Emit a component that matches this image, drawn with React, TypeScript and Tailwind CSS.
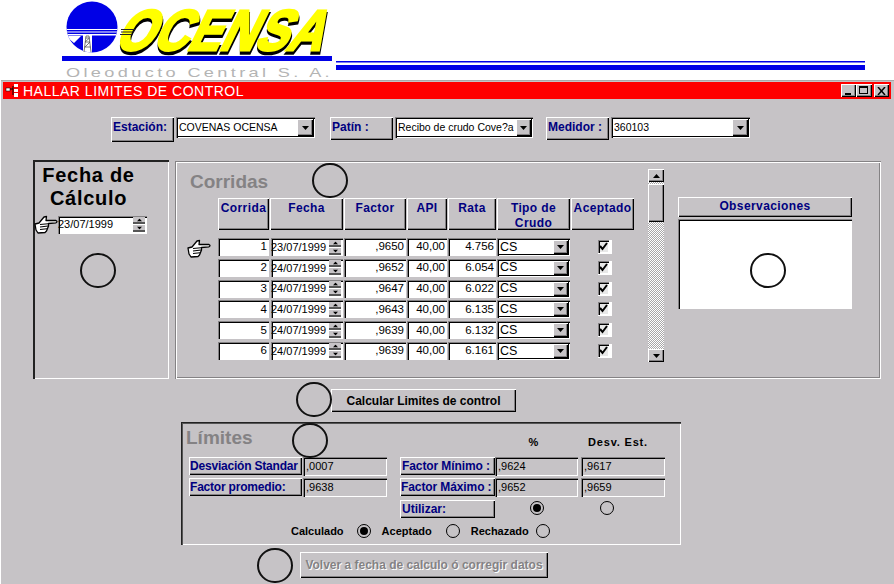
import React from "react";

const raised = "bg-[#c6c3c6] shadow-[inset_1px_1px_0_#ffffff,inset_-1px_-1px_0_#000000,inset_-2px_-2px_0_#848284]";
const sunken = "shadow-[inset_1px_1px_0_#848284,inset_2px_2px_0_#000000,inset_-1px_-1px_0_#ffffff]";
const comboFrame = "shadow-[inset_1px_1px_0_#848284,inset_2px_2px_0_#000000,inset_-1px_-1px_0_#ffffff,inset_-2px_-2px_0_#000000]";
const label = "text-[12px] font-bold text-[#000080] tracking-[0.4px] leading-[15px]";
const flatLabel = "text-[12px] font-bold text-[#000080] leading-[14px]";

function Logo() {
  return (
    <svg width="894" height="80" viewBox="0 0 894 80" className="block">
      <defs>
        <clipPath id="sun"><circle cx="92" cy="27" r="25.5" /></clipPath>
      </defs>
      <g clipPath="url(#sun)">
        <rect x="60" y="0" width="64" height="56" fill="#0000e6" />
        <rect x="60" y="29" width="64" height="1" fill="#fff" />
        <rect x="60" y="31.5" width="64" height="1" fill="#fff" />
        <rect x="60" y="34" width="64" height="1.5" fill="#fff" />
        <polygon points="64,36 81,36 74,43 68,38 64,46" fill="#fff" />
        <rect x="83" y="35" width="9" height="18" fill="#fff" />
      </g>
      <path d="M84 52 L86 36 L89 36 L91 52 M84.500 47 L90.500 47 M85 42 L90 42 M85.500 38 L89.500 38 M85 47 L90 42 M85 42 L89.500 38" stroke="#555" strokeWidth="0.8" fill="none" />
      <g transform="translate(113 50) skewX(-26)" fontFamily="'Liberation Sans', sans-serif" fontWeight="700" fontSize="57">
        <text x="1.500" y="2.500" textLength="207" lengthAdjust="spacingAndGlyphs" fill="#000" stroke="#000" strokeWidth="3.500">OCENSA</text>
        <text x="0" y="0" textLength="207" lengthAdjust="spacingAndGlyphs" fill="#ffff00" stroke="#ffff00" strokeWidth="2.800">OCENSA</text>
      </g>
      <rect x="121" y="29" width="14" height="1" fill="#222" />
      <rect x="121" y="31.500" width="13" height="1" fill="#222" />
      <rect x="120" y="34" width="13" height="1" fill="#222" />
      <rect x="62" y="56" width="270" height="5" fill="#0000e6" />
      <text x="66" y="77" textLength="267" lengthAdjust="spacingAndGlyphs" letterSpacing="2.500" fontFamily="'Liberation Sans', sans-serif" fontSize="13.500" fill="#b4b4b4" fontWeight="400">Oleoducto Central S. A.</text>
      <rect x="336" y="61" width="529" height="1.500" fill="#0000e6" />
      <rect x="336" y="65" width="529" height="5" fill="#0000e6" />
    </svg>
  );
}

function Hand({ className = "" }: { className?: string }) {
  return (
    <svg width="24" height="19" viewBox="0 0 24 19" className={`shrink-0 ${className}`}>
      <path
        d="M1 9 L5 8 L10 2 L12.500 1.500 L12 5.500 L22 5.500 Q24 6.500 22 7.800 L14.500 8.500 L14.500 11 L13.500 13.500 L12.500 16 L11 17.500 L4 18 L2 15 Z"
        fill="#ffffff"
        stroke="#000000"
        strokeWidth="1.300"
        strokeLinejoin="round"
      />
      <path d="M6 9.500 L14 8.800 M6 12 L14 11 M6 14.500 L13 13.800" stroke="#000000" strokeWidth="1.100" fill="none" />
    </svg>
  );
}

function Arrow({ up = false, className = "" }: { up?: boolean; className?: string }) {
  return (
    <svg width="7" height="4" viewBox="0 0 7 4" className={className}>
      <polygon points={up ? "3.500,0 7,4 0,4" : "0,0 7,0 3.500,4"} fill="#000" />
    </svg>
  );
}

function Combo({ text, className = "", small = false }: { text: string; className?: string; small?: boolean }) {
  return (
    <div className={`flex items-center bg-white pl-[3px] pr-[2px] overflow-hidden text-black ${comboFrame} ${className}`}>
      <span className="flex-1 overflow-hidden whitespace-nowrap">{text}</span>
      <span className={`flex items-center justify-center shrink-0 ${small ? "w-[15px]" : "w-[16px]"} h-[calc(100%-4px)] my-[2px] ${raised}`}>
        <Arrow />
      </span>
    </div>
  );
}

function Spin() {
  return (
    <span className="flex flex-col gap-px w-[12px] shrink-0">
      <span className={`flex items-center justify-center h-[7px] bg-[#c6c3c6] shadow-[inset_0_-2px_0_#555555]`}><Arrow up className="scale-75 -mt-px" /></span>
      <span className={`flex items-center justify-center h-[7px] bg-[#c6c3c6] shadow-[inset_0_-2px_0_#555555]`}><Arrow className="scale-75 -mt-px" /></span>
    </span>
  );
}

function DateField({ text, className = "" }: { text: string; className?: string }) {
  return (
    <div className={`flex items-center justify-between bg-white pr-[2px] text-[11px] text-black ${sunken} ${className}`}>
      <span className="whitespace-nowrap">{text}</span>
      <Spin />
    </div>
  );
}

function Num({ text }: { text: string }) {
  return (
    <div className={`flex items-center justify-end bg-white pr-[2px] mr-px h-[18px] text-[11.500px] text-black ${sunken}`}>{text}</div>
  );
}

function Check() {
  return (
    <div className="flex justify-center mr-px">
      <div className="flex bg-white w-[14px] h-[14px] ml-[4px]">
        <div className={`flex items-center justify-center w-[11px] h-[13px] bg-[#e8e8e8] ${sunken}`}>
          <svg width="9" height="9" viewBox="0 0 9 9"><path d="M1 4 L3.500 7 L8 1" stroke="#000" strokeWidth="2" fill="none" /></svg>
        </div>
      </div>
    </div>
  );
}

function Head({ children }: { children: React.ReactNode }) {
  return <div className={`${raised} ${label} mr-px h-[32px] pt-[3px] text-center`}>{children}</div>;
}

function Radio({ on = false }: { on?: boolean }) {
  return (
    <span className="inline-flex items-center justify-center w-[14px] h-[14px] rounded-full border border-black bg-[#c6c3c6]">
      {on && <span className="w-[8px] h-[8px] rounded-full bg-black" />}
    </span>
  );
}

function ReadField({ text, className = "" }: { text: string; className?: string }) {
  return <div className={`flex items-center pl-[3px] h-[19px] text-[11px] text-black ${sunken} ${className}`}>{text}</div>;
}

function Circle({ className }: { className: string }) {
  return <div className={`absolute w-[36px] h-[35px] rounded-full border-2 border-[#111111] ${className}`} />;
}

const rows = [
  ["1", "23/07/1999", ",9650", "4.756"],
  ["2", "24/07/1999", ",9652", "6.054"],
  ["3", "24/07/1999", ",9647", "6.022"],
  ["4", "24/07/1999", ",9643", "6.135"],
  ["5", "24/07/1999", ",9639", "6.132"],
  ["6", "24/07/1999", ",9639", "6.161"],
];

export default function App() {
  return (
    <div className="relative w-[894px] h-[584px] overflow-hidden bg-white font-['Liberation_Sans',sans-serif]">
      <Logo />
      <div className="ml-[1px] h-[504px] bg-[#c6c3c6] pt-[2px] pl-[2px] pr-[3px] shadow-[inset_0_1px_0_#aaaaaa]">
        {/* title bar */}
        <div className="flex items-center h-[17px] bg-[#ff0000] pl-[2px] pr-[2px]">
          <svg width="14" height="13" viewBox="0 0 14 13" className="shrink-0">
            <rect x="1" y="4" width="4" height="3" fill="#fff" stroke="#000" strokeWidth="0.500" />
            <rect x="9" y="0" width="4" height="3" fill="#fff" />
            <rect x="9" y="5" width="4" height="3" fill="#fff" />
            <rect x="9" y="9" width="4" height="4" fill="#fff" />
            <path d="M5 5 H8 M8 2 V11" stroke="#000" strokeWidth="1" />
          </svg>
          <span className="ml-[4px] text-[14px] leading-none text-white tracking-[0.5px] whitespace-nowrap">HALLAR LIMITES DE CONTROL</span>
          <div className="ml-auto flex">
            <span className={`relative w-[15px] h-[13px] ${raised}`}><span className="absolute left-[4px] bottom-[2px] w-[6px] h-[2px] bg-black" /></span>
            <span className={`relative w-[16px] h-[13px] ${raised}`}><span className="absolute left-[3px] top-[2px] w-[9px] h-[8px] border border-black border-t-2" /></span>
            <span className={`ml-[2px] flex items-center justify-center w-[15px] h-[13px] ${raised}`}>
              <svg width="9" height="8" viewBox="0 0 9 8"><path d="M1 0 L8 8 M8 0 L1 8" stroke="#000" strokeWidth="1.500" /></svg>
            </span>
          </div>
        </div>

        {/* selectors */}
        <div className="flex items-start mt-[18px] ml-[108px]">
          <div className={`${raised} ${flatLabel} w-[63px] h-[25px] pt-[3px] pl-[2px]`}>Estación:</div>
          <Combo text="COVENAS OCENSA" className="ml-[2px] w-[139px] h-[21px] text-[10.500px]" />
          <div className={`${raised} ${flatLabel} ml-[15px] w-[63px] h-[23px] pt-[3px] pl-[2px]`}>Patín :</div>
          <Combo text="Recibo de crudo Cove?a" small className="ml-[2px] w-[138px] h-[21px] text-[10.500px]" />
          <div className={`${raised} ${flatLabel} ml-[13px] w-[63px] h-[23px] pt-[3px] pl-[2px]`}>Medidor :</div>
          <Combo text="360103" className="ml-[2px] w-[139px] h-[21px] text-[10.500px]" />
        </div>

        {/* main panels */}
        <div className="flex items-start mt-[18px] ml-[30px]">
          <div className="w-[136px] h-[219px] shadow-[inset_2px_2px_0_#222222,inset_-1px_-1px_0_#ffffff] pt-[4px]">
            <div className="pr-[25px] text-[20px] leading-[23px] font-bold text-black text-center tracking-[0.7px]">Fecha de<br />Cálculo</div>
            <div className="flex items-center mt-[5px] ml-[1px]">
              <Hand />
              <DateField text="23/07/1999" className="w-[89px] h-[18px]" />
            </div>
          </div>

          <div className="flex w-[706px] h-[218px] mt-px ml-[6px] shadow-[inset_1px_1px_0_#848284,inset_2px_2px_0_#ffffff,inset_-1px_-1px_0_#ffffff,inset_-2px_-2px_0_#848284]">
            <div className="relative pl-[15px] w-[461px] shrink-0">
              <div className="h-[37px] pt-[10px] text-[19px] leading-[22px] font-bold text-[#848284]">Corridas</div>
              <div className="ml-[28px]">
                <div className="grid grid-cols-[52px_74px_63px_41px_49px_74px_64px]">
                  <Head>Corrida</Head>
                  <Head>Fecha</Head>
                  <Head>Factor</Head>
                  <Head>API</Head>
                  <Head>Rata</Head>
                  <Head>Tipo de<br />Crudo</Head>
                  <Head>Aceptado</Head>
                </div>
                <Hand className="absolute left-[12px] top-[78px]" />
                <div className="mt-[8px] grid grid-cols-[52px_74px_63px_41px_49px_74px_64px] gap-y-[2.800px] items-center">
                  {rows.map((r) => (
                    <React.Fragment key={r[0]}>
                      <Num text={r[0]} />
                      <DateField text={r[1]} className="h-[18px] mr-px ml-px" />
                      <Num text={r[2]} />
                      <Num text="40,00" />
                      <Num text={r[3]} />
                      <Combo text="CS" small className="h-[18px] mr-px text-[12.500px]" />
                      <Check />
                    </React.Fragment>
                  ))}
                </div>
              </div>
            </div>
            {/* scrollbar */}
            <div className="flex flex-col w-[16px] h-[193px] mt-[8px] ml-[12px] shrink-0 bg-[repeating-conic-gradient(#ffffff_0_25%,#a8a6a8_0_50%)] bg-[length:2px_2px]">
              <div className={`flex items-center justify-center h-[13px] ${raised}`}><Arrow up /></div>
              <div className={`mt-[2px] h-[38px] ${raised}`} />
              <div className="flex-1" />
              <div className={`flex items-center justify-center h-[13px] ${raised}`}><Arrow /></div>
            </div>
            {/* observations */}
            <div className="ml-[14px] w-[174px] mt-[36px] shrink-0">
              <div className={`${raised} ${label} h-[20px] pt-[2px] text-center`}>Observaciones</div>
              <div className={`mt-[2px] h-[90px] bg-white ${sunken}`} />
            </div>
          </div>
        </div>

        <div className="mt-[10px] ml-[328px]">
          <button className={`${raised} block w-[185px] h-[23px] text-[12px] font-bold text-black`}>Calcular Limites de control</button>
        </div>

        {/* limits */}
        <div className="mt-[10px] ml-[178px] w-[500px] h-[123px] shadow-[inset_1px_1px_0_#222222,inset_2px_2px_0_#555555,inset_-1px_-1px_0_#ffffff] pl-[8px]">
          <div className="grid grid-cols-[114px_97px_95px_86px_84px] grid-rows-[32px_18px_18px_18px] gap-y-[3px]">
            <div className="col-span-3 -ml-[3px] pt-[5px] text-[19px] leading-[22px] font-bold text-[#848284]">Límites</div>
            <div className="pt-[12px] pr-[9px] text-center text-[11px] font-bold text-black">%</div>
            <div className="pt-[12px] pr-[10px] text-center text-[11px] font-bold text-black tracking-[0.8px]">Desv. Est.</div>

            <div className={`${raised} ${flatLabel} mr-px h-[18px] pl-[1px] pt-[2px] whitespace-nowrap tracking-[-0.2px]`}>Desviación Standar</div>
            <ReadField text=",0007" className="w-[84px]" />
            <div className={`${raised} ${flatLabel} h-[18px] pl-[2px] pt-[2px] whitespace-nowrap tracking-[-0.1px]`}>Factor Mínimo :</div>
            <ReadField text=",9624" className="w-[83px]" />
            <ReadField text=",9617" className="w-[84px]" />

            <div className={`${raised} ${flatLabel} mr-px h-[18px] pl-[1px] pt-[2px] whitespace-nowrap tracking-[-0.2px]`}>Factor promedio:</div>
            <ReadField text=",9638" className="w-[84px]" />
            <div className={`${raised} ${flatLabel} h-[18px] pl-[1px] pt-[2px] whitespace-nowrap tracking-[-0.1px]`}>Factor Máximo :</div>
            <ReadField text=",9652" className="w-[83px]" />
            <ReadField text=",9659" className="w-[84px]" />

            <div className="col-span-2" />
            <div className={`${raised} ${flatLabel} h-[18px] pl-[2px] pt-[2px] mt-px`}>Utilizar:</div>
            <div className="flex items-center justify-center pr-[2px]"><Radio on /></div>
            <div className="flex items-center justify-center pr-[32px]"><Radio /></div>
          </div>
          <div className="flex items-center mt-[5px] ml-[102px] text-[11px] font-bold text-black h-[18px]">
            <span>Calculado</span>
            <span className="ml-[13px] flex"><Radio on /></span>
            <span className="ml-[11px]">Aceptado</span>
            <span className="ml-[14px] flex"><Radio /></span>
            <span className="ml-[11px]">Rechazado</span>
            <span className="ml-[7px] flex"><Radio /></span>
          </div>
        </div>

        <div className="mt-[7px] ml-[297px]">
          <button className={`${raised} block w-[248px] h-[26px] text-[12px] font-bold text-[#848284] [text-shadow:1px_1px_0_#ffffff]`}>Volver a fecha de calculo ó corregir datos</button>
        </div>
      </div>

      <Circle className="left-[312px] top-[163px]" />
      <Circle className="left-[80px] top-[253px]" />
      <Circle className="left-[750px] top-[253px]" />
      <Circle className="left-[296px] top-[382px]" />
      <Circle className="left-[292px] top-[423px]" />
      <Circle className="left-[257px] top-[548px]" />
    </div>
  );
}
